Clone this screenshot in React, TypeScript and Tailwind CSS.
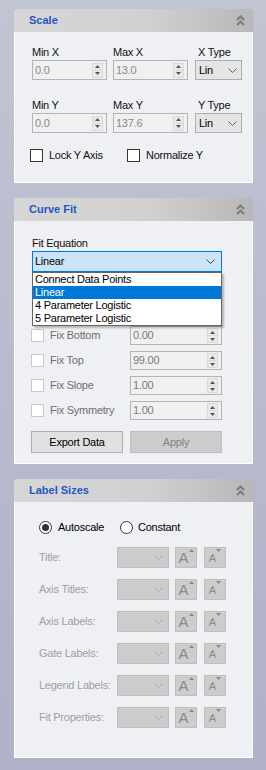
import React from "react";

const font = "font-['Liberation_Sans',Arial,sans-serif]";

function Chevrons() {
  return (
    <svg width="9" height="11" viewBox="0 0 9 11" fill="none" stroke="#7c7c7c" strokeWidth="2">
      <path d="M1 5 L4.5 1.5 L8 5" />
      <path d="M1 10 L4.5 6.5 L8 10" />
    </svg>
  );
}

function DownArrow({ color = "#606060" }: { color?: string }) {
  return (
    <svg width="9" height="5" viewBox="0 0 9 5" fill="none" stroke={color} strokeWidth="1">
      <path d="M0.5 0.5 L4.5 4.5 L8.5 0.5" />
    </svg>
  );
}

function Tri({ up }: { up?: boolean }) {
  return (
    <svg width="5" height="3" viewBox="0 0 5 3" fill="#555">
      {up ? <path d="M0 3 L2.5 0 L5 3 Z" /> : <path d="M0 0 L5 0 L2.5 3 Z" />}
    </svg>
  );
}

type PanelProps = { title: string; children: React.ReactNode; className?: string };

function Panel({ title, children, className = "" }: PanelProps) {
  return (
    <div className="w-[239px]">
      <div className="h-[23px] rounded-t-[3px] bg-[linear-gradient(to_right,#d6d6d6_0%,#d1d1d1_55%,#b8b8b8_100%)] flex items-center justify-between pl-[15px] pr-[8px]">
        <span className="text-[11px] font-bold text-[#2457c5] leading-[13px] tracking-normal">{title}</span>
        <Chevrons />
      </div>
      <div className={"bg-[#eef0f4] border-x border-b border-white " + className}>{children}</div>
    </div>
  );
}

function Spin() {
  return (
    <div className="flex flex-col w-[11px] h-[15px] mr-[3px]">
      <div className="flex-1 flex items-center justify-center bg-[#e9e9e9] border border-[#dadada]">
        <Tri up />
      </div>
      <div className="flex-1 flex items-center justify-center bg-[#e9e9e9] border-x border-b border-[#dadada]">
        <Tri />
      </div>
    </div>
  );
}

function NumBox({ value, w, h, color }: { value: string; w: string; h: string; color: string }) {
  return (
    <div className={`${w} ${h} flex items-center border border-[#b4b4b4] bg-[#f0f0f0]`}>
      <span className={`flex-1 pl-[2px] ${color}`}>{value}</span>
      <Spin />
    </div>
  );
}

function LinSelect() {
  return (
    <div className="w-[47px] h-[20px] flex items-center justify-between border border-[#adadad] bg-[#e5e5e5] pl-[3px] pr-[4px] text-black">
      <span>Lin</span>
      <DownArrow />
    </div>
  );
}

function Check({ border }: { border: string }) {
  return <div className={`w-[13px] h-[13px] bg-white border ${border}`} />;
}

function ScalePanel() {
  return (
    <Panel title="Scale" className="pt-[14px] pb-[20px] pl-[17px]">
      <div className="flex leading-[13px] text-[#111]">
        <span className="w-[81px]">Min X</span>
        <span className="w-[85px]">Max X</span>
        <span>X Type</span>
      </div>
      <div className="flex mt-[1px]">
        <NumBox value="0.0" w="w-[75px]" h="h-[20px]" color="text-[#8a8a8a]" />
        <div className="ml-[6px]">
          <NumBox value="13.0" w="w-[75px]" h="h-[20px]" color="text-[#8a8a8a]" />
        </div>
        <div className="ml-[7px]">
          <LinSelect />
        </div>
      </div>
      <div className="flex leading-[13px] text-[#111] mt-[19px]">
        <span className="w-[81px]">Min Y</span>
        <span className="w-[85px]">Max Y</span>
        <span>Y Type</span>
      </div>
      <div className="flex mt-[1px]">
        <NumBox value="0.0" w="w-[75px]" h="h-[20px]" color="text-[#8a8a8a]" />
        <div className="ml-[6px]">
          <NumBox value="137.6" w="w-[75px]" h="h-[20px]" color="text-[#8a8a8a]" />
        </div>
        <div className="ml-[7px]">
          <LinSelect />
        </div>
      </div>
      <div className="flex items-center mt-[16px] -ml-[2px] h-[13px] leading-[13px] text-[#111]">
        <div className="w-[97px] flex items-center gap-[6px]">
          <Check border="border-[#333]" />
          <span>Lock Y Axis</span>
        </div>
        <div className="flex items-center gap-[6px]">
          <Check border="border-[#333]" />
          <span>Normalize Y</span>
        </div>
      </div>
    </Panel>
  );
}

const fits = ["Connect Data Points", "Linear", "4 Parameter Logistic", "5 Parameter Logistic"];

function FixRow({ label, value }: { label: string; value: string }) {
  return (
    <div className="flex items-center h-[19px]">
      <div className="w-[99px] flex items-center gap-[6px]">
        <Check border="border-[#c9c9c9]" />
        <span className="text-[#6f6f6f] leading-[13px]">{label}</span>
      </div>
      <NumBox value={value} w="w-[92px]" h="h-[19px]" color="text-[#7a7a7a]" />
    </div>
  );
}

function CurveFitPanel() {
  return (
    <Panel title="Curve Fit" className="pt-[16px] pb-[10px] pl-[16px]">
      <div className="pl-[1px] leading-[13px] text-[#111]">Fit Equation</div>
      <div className="relative ml-[1px] mt-[1px] w-[190px]">
        <div className="h-[21px] flex items-center justify-between border border-[#0078d7] bg-[#cce4f7] pl-[2px] pr-[6px] text-black">
          <span>Linear</span>
          <DownArrow color="#444" />
        </div>
        <div className="absolute top-full left-0 w-[190px] z-10 bg-white border border-[#646464] shadow-[2px_2px_2px_rgba(0,0,0,0.25)] text-black">
          {fits.map((f) => (
            <div
              key={f}
              className={
                "h-[13px] leading-[13px] pl-[2px] " + (f === "Linear" ? "bg-[#0078d7] text-white" : "")
              }
            >
              {f}
            </div>
          ))}
        </div>
      </div>
      <div className="h-[54px]" />
      <div className="flex flex-col gap-[6px]">
        <FixRow label="Fix Bottom" value="0.00" />
        <FixRow label="Fix Top" value="99.00" />
        <FixRow label="Fix Slope" value="1.00" />
        <FixRow label="Fix Symmetry" value="1.00" />
      </div>
      <div className="flex gap-[7px] mt-[11px]">
        <div className="w-[92px] h-[22px] flex items-center justify-center border border-[#adadad] bg-[#e1e1e1] text-black">
          Export Data
        </div>
        <div className="w-[92px] h-[22px] flex items-center justify-center border border-[#bfbfbf] bg-[#cccccc] text-[#838383]">
          Apply
        </div>
      </div>
    </Panel>
  );
}

function Radio({ checked }: { checked?: boolean }) {
  return (
    <div className="w-[13px] h-[13px] rounded-full border border-[#333] bg-white flex items-center justify-center">
      {checked && <div className="w-[7px] h-[7px] rounded-full bg-[#333]" />}
    </div>
  );
}

function Grow() {
  return (
    <div className="w-[22px] h-[21px] border border-[#bfbfbf] bg-[#cccccc] flex items-end justify-center pb-[2px] text-[#8a8a8a]">
      <span className="text-[15px] leading-[15px] tracking-normal">A</span>
      <svg width="5" height="3" viewBox="0 0 5 3" fill="#8a8a8a" className="self-start mt-[1px]">
        <path d="M0 3 L2.5 0 L5 3 Z" />
      </svg>
    </div>
  );
}

function Shrink() {
  return (
    <div className="w-[22px] h-[21px] border border-[#bfbfbf] bg-[#cccccc] flex items-end justify-center pb-[3px] text-[#8a8a8a]">
      <span className="text-[11px] leading-[11px] tracking-normal">A</span>
      <svg width="5" height="3" viewBox="0 0 5 3" fill="#8a8a8a" className="self-start mt-[1px]">
        <path d="M0 0 L5 0 L2.5 3 Z" />
      </svg>
    </div>
  );
}

const sizeRows = ["Title:", "Axis Titles:", "Axis Labels:", "Gate Labels:", "Legend Labels:", "Fit Properties:"];

function LabelSizesPanel() {
  return (
    <Panel title="Label Sizes" className="pt-[19px] pb-[29px] pl-[24px]">
      <div className="flex items-center h-[13px] leading-[13px] text-black">
        <div className="w-[81px] flex items-center gap-[6px]">
          <Radio checked />
          <span>Autoscale</span>
        </div>
        <div className="flex items-center gap-[5px]">
          <Radio />
          <span>Constant</span>
        </div>
      </div>
      <div className="flex flex-col gap-[11px] mt-[13px]">
        {sizeRows.map((r) => (
          <div key={r} className="flex items-center h-[21px]">
            <span className="w-[78px] text-[#a0a0a0] leading-[13px]">{r}</span>
            <div className="w-[52px] h-[21px] flex items-center justify-end pr-[5px] border border-[#bfbfbf] bg-[#cccccc]">
              <DownArrow color="#a8a8a8" />
            </div>
            <div className="ml-[6px]">
              <Grow />
            </div>
            <div className="ml-[7px]">
              <Shrink />
            </div>
          </div>
        ))}
      </div>
    </Panel>
  );
}

export default function App() {
  return (
    <div
      className={`${font} text-[11px] tracking-[-0.25px] min-h-[770px] w-[266px] bg-[linear-gradient(to_bottom,#c1c4d2,#afb1c8)] pt-[9px] pl-[14px] flex flex-col gap-[15px]`}
    >
      <ScalePanel />
      <CurveFitPanel />
      <LabelSizesPanel />
    </div>
  );
}
